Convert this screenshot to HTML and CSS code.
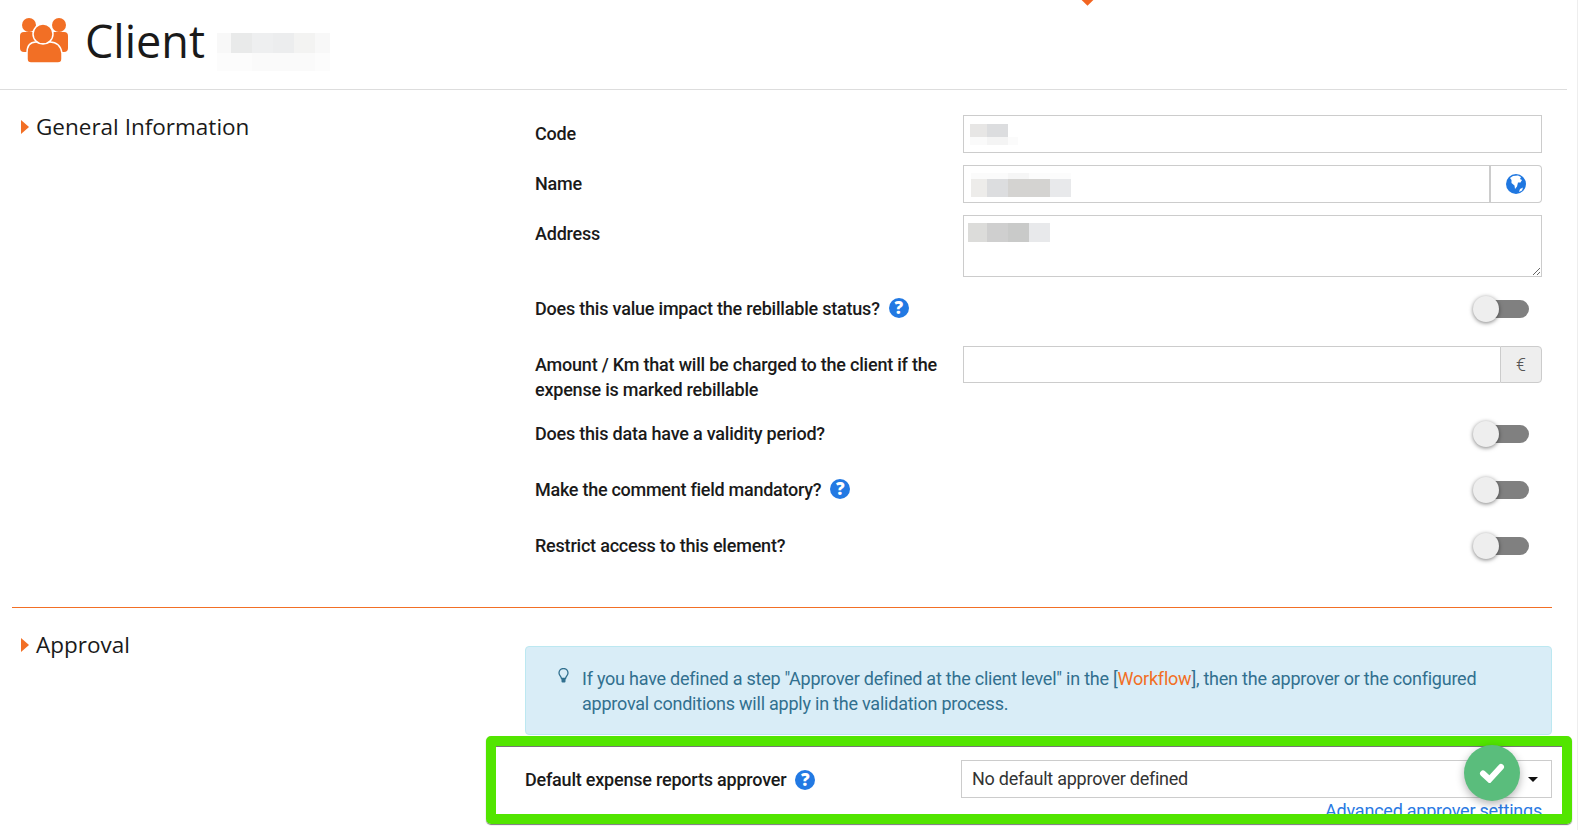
FILE: index.html
```html
<!DOCTYPE html>
<html lang="en">
<head>
<meta charset="utf-8">
<title>Client</title>
<link rel="stylesheet" href="styles.css">
</head>
<body>
<div class="page">
  <span class="top-marker"></span>
  <header class="page-header">
    <svg class="users-icon" viewBox="0 0 48 45" width="48" height="45">
      <circle cx="9" cy="7" r="7" fill="#f26f25"/>
      <circle cx="39" cy="7" r="7" fill="#f26f25"/>
      <path d="M0 18q0-4 4-4h10q2 0 3 2v18H4q-4 0-4-4z" fill="#f26f25"/>
      <path d="M48 18q0-4-4-4H34q-2 0-3 2v18h13q4 0 4-4z" fill="#f26f25"/>
      <circle cx="23" cy="16" r="10" fill="#f26f25" stroke="#fff" stroke-width="1.5"/>
      <path d="M7 35q0-11 9-11q3 2 7 2t7-2q10 0 12 11v6q0 4-4 4H11q-4 0-4-4z" fill="#f26f25" stroke="#fff" stroke-width="1.5"/>
    </svg>
    <h1 class="page-title">Client</h1>
    <svg class="redact redact-title" width="113" height="38" viewBox="0 0 113 38">
      <rect width="14" height="20" fill="#f8f8f8"/><rect x="14" width="21" height="20" fill="#e9eaea"/><rect x="35" width="21" height="20" fill="#eeeff0"/><rect x="56" width="21" height="20" fill="#ecedee"/><rect x="77" width="21" height="20" fill="#f3f3f2"/><rect x="98" width="15" height="20" fill="#f8f8f8"/>
      <rect y="20" width="35" height="18" fill="#fcfcfc"/><rect x="35" y="20" width="63" height="18" fill="#fafafa"/><rect x="98" y="20" width="15" height="18" fill="#fcfcfc"/>
    </svg>
  </header>

  <section class="section">
    <h2 class="section-title">General Information</h2>
    <div class="form">
      <div class="row">
        <label class="label">Code</label>
        <div class="field">
          <input class="input" type="text">
          <svg class="redact redact-code" width="48" height="21" viewBox="0 0 48 21">
            <rect width="17" height="13" fill="#e7e6e5"/><rect x="17" width="21" height="13" fill="#dcdddf"/>
            <rect y="13" width="17" height="8" fill="#fafafa"/><rect x="17" y="13" width="21" height="8" fill="#f4f4f4"/><rect x="38" y="13" width="10" height="8" fill="#fbfbfb"/>
          </svg>
        </div>
      </div>
      <div class="row">
        <label class="label">Name</label>
        <div class="field group">
          <input class="input input-joined" type="text">
          <span class="addon addon-white">
            <svg width="20" height="20" viewBox="0 0 20 20">
              <circle cx="10" cy="10" r="10" fill="#1f77e0"/>
              <path d="M7 2l5-.6 3 1.6-1 2 2 1-1.500 2.500-2.500 0-1 4-2 2.500-.5-3.500-3-2.500v-3L4 4z" fill="#fff"/>
              <path d="M14 15l3-1.500-1 3-3 1.500z" fill="#fff"/>
            </svg>
          </span>
          <svg class="redact redact-name" width="100" height="24" viewBox="0 0 100 24">
            <rect width="40" height="6" fill="#fbfbfb"/><rect x="37" width="21" height="6" fill="#f6f6f6"/><rect x="58" width="42" height="6" fill="#fcfcfc"/>
            <rect y="6" width="16" height="18" fill="#edecea"/><rect x="16" y="6" width="21" height="18" fill="#dcdddf"/><rect x="37" y="6" width="42" height="18" fill="#d4d3d1"/><rect x="79" y="6" width="21" height="18" fill="#e8e9eb"/>
          </svg>
        </div>
      </div>
      <div class="row">
        <label class="label">Address</label>
        <div class="field">
          <textarea class="input textarea"></textarea>
          <svg class="redact redact-address" width="82" height="19" viewBox="0 0 82 19">
            <rect width="19" height="19" fill="#dcdcda"/><rect x="19" width="21" height="19" fill="#cfcfcf"/><rect x="40" width="21" height="19" fill="#c9cac9"/><rect x="61" width="21" height="19" fill="#e8e9eb"/>
          </svg>
        </div>
      </div>
      <div class="row row-toggle gap-first">
        <label class="label-inline">Does this value impact the rebillable status? <span class="help">?</span></label>
        <span class="toggle"><span class="knob"></span></span>
      </div>
      <div class="row row-amount">
        <label class="label">Amount / Km that will be charged to the client if the expense is marked rebillable</label>
        <div class="field group group-short">
          <input class="input input-joined" type="text">
          <span class="addon addon-grey">€</span>
        </div>
      </div>
      <div class="row row-toggle gap-large">
        <label class="label-inline">Does this data have a validity period?</label>
        <span class="toggle"><span class="knob"></span></span>
      </div>
      <div class="row row-toggle gap-large">
        <label class="label-inline label-tight">Make the comment field mandatory? <span class="help">?</span></label>
        <span class="toggle"><span class="knob"></span></span>
      </div>
      <div class="row row-toggle">
        <label class="label-inline">Restrict access to this element?</label>
        <span class="toggle"><span class="knob"></span></span>
      </div>
    </div>
  </section>

  <section class="section section-approval">
    <h2 class="section-title">Approval</h2>
    <div class="approval-body">
      <div class="alert">
        <svg class="bulb" width="11" height="15" viewBox="0 0 11 15">
          <path d="M3.500 10.500C3 8 1 7.500 1 5a4.500 4.500 0 0 1 9 0c0 2.500-2 3-2.500 5.500z" fill="none" stroke="#31708f" stroke-width="1.300"/>
          <rect x="3.500" y="10.500" width="4" height="4" rx="1" fill="#31708f"/>
        </svg>
        <p class="alert-text">If you have defined a step "Approver defined at the client level" in the [<a class="alert-link">Workflow</a>], then the approver or the configured approval conditions will apply in the validation process.</p>
      </div>
      <div class="approver-row">
        <label class="label-inline approver-label">Default expense reports approver <span class="help">?</span></label>
        <div class="select"><span>No default approver defined</span><span class="caret"></span></div>
      </div>
      <a class="advanced-link">Advanced approver settings</a>
    </div>
  </section>

  <div class="highlight-frame"></div>
  <button class="fab" type="button">
    <svg width="26" height="20" viewBox="0 0 26 20"><path d="M4 10.500l6.500 6L22 4" fill="none" stroke="#fff" stroke-width="6" stroke-linecap="round" stroke-linejoin="miter"/></svg>
  </button>
</div>
</body>
</html>
```
FILE: styles.css
```css
* { box-sizing: border-box; }
html, body { margin: 0; padding: 0; background: #fff; }
body { font-family: Roboto, "Liberation Sans", sans-serif; color: #1a1a1a; overflow: hidden; }
.page { position: relative; width: 1578px; height: 830px; overflow: hidden; border-right: 1px solid #eee; }

.top-marker { position: absolute; left: 1083px; top: -5px; width: 9px; height: 9px; background: #f26522; transform: rotate(45deg); }

.page-header { display: flex; align-items: flex-start; height: 90px; width: 1567px; padding: 18px 0 0 20px; border-bottom: 1px solid #ddd; }
.users-icon { flex: none; }
.page-title { margin: 0 0 0 17px; font: 400 45px/46px "Open Sans", sans-serif; color: #1a1a1a; }
.redact { position: absolute; }
.redact-title { position: static; margin: 15px 0 0 12px; flex: none; }

.section { display: grid; grid-template-columns: 513px 1027px; width: 1540px; margin-left: 12px; padding-top: 20px; }
.section-approval { border-top: 1px solid #f26f25; margin-top: 29px; }
.section-title { position: relative; margin: 0; padding-left: 24px; font: 400 22.5px/34px "Open Sans", sans-serif; color: #1a1a1a; height: 34px; }
.section-title::before { content: ""; position: absolute; left: 9px; top: 10px; border-left: 8px solid #f26f25; border-top: 7px solid transparent; border-bottom: 7px solid transparent; }

.form { padding: 5px 10px 0; }
.row { display: grid; grid-template-columns: 428px 579px; margin-bottom: 12px; }
.label { font-size: 18px; font-weight: 500; line-height: 25px; padding: 6px 10px 0 0; letter-spacing: -.21px; }
.label-inline { font-size: 18px; font-weight: 500; line-height: 25px; letter-spacing: -.21px; display: flex; align-items: center; gap: 9px; white-space: nowrap; }
.label-tight { letter-spacing: -.27px; }
.row-toggle .label-inline { padding-bottom: 2px; }
.field { position: relative; display: flex; }
.input { display: block; width: 100%; height: 38px; border: 1px solid #ccc; background: #fff; padding: 6px 12px; margin: 0; outline: none; font: inherit; }
.textarea { height: 62px; }
.input-joined { flex: 1; min-width: 0; border-right: 0; }
.group-short { height: 37px; }
.group-short .input { height: 37px; }
.addon { flex: none; display: flex; align-items: center; justify-content: center; border: 1px solid #ccc; border-radius: 0 4px 4px 0; height: 100%; }
.addon-white { width: 53px; background: #fff; border-left-width: 2px; }
.addon-grey { width: 42px; background: #eee; color: #555; font-size: 18px; font-weight: 300; }
.redact-code { left: 7px; top: 9px; }
.redact-name { left: 8px; top: 8px; }
.redact-address { left: 5px; top: 8px; }

.row-toggle { height: 40px; align-items: center; }
.gap-first { margin-bottom: 17px; }
.gap-large { margin-bottom: 16px; }
.toggle { position: relative; justify-self: end; display: block; width: 52px; height: 18px; margin-right: 13px; border-radius: 9px; background: #808080; }
.knob { position: absolute; left: -4px; top: -4px; width: 26px; height: 26px; border-radius: 50%; background: #eee; box-shadow: 0 1px 4px rgba(0,0,0,.5); }
.help { flex: none; display: inline-flex; align-items: center; justify-content: center; width: 20px; height: 20px; border-radius: 50%; background: #2279e3; color: #fff; font: 800 17px/20px "Open Sans", sans-serif; letter-spacing: 0; }

.approval-body { padding-top: 18px; }
.alert { display: flex; gap: 14px; height: 89px; padding: 19px 32px 0; background: #d9edf7; border: 1px solid #bce8f1; border-radius: 4px; }
.bulb { flex: none; margin-top: 2px; }
.alert-text { margin: 0 0 0 -1px; font-size: 18px; line-height: 25px; color: #31708f; letter-spacing: -.23px; }
.alert-link { color: #f26f25; }
.approver-row { display: grid; grid-template-columns: 436px 591px; margin-top: 25px; height: 38px; }
.approver-label { padding-top: 1px; }
.select { display: flex; align-items: center; justify-content: space-between; border: 1px solid #ccc; padding: 0 13px 2px 10px; font-size: 18px; letter-spacing: -.25px; color: #333; }
.caret { border-top: 5px solid #111; border-left: 5px solid transparent; border-right: 5px solid transparent; margin-top: 2px; }
.advanced-link { display: block; padding-right: 10px; text-align: right; font-size: 18px; line-height: 25px; letter-spacing: -.23px; color: #2a7ae2; }

.highlight-frame { position: absolute; left: 486px; top: 736px; width: 1086px; height: 88px; border: 10px solid #52e500; border-radius: 5px; box-shadow: 0 1px 1px #777, inset 0 1px 0 #777; }
.fab { position: absolute; left: 1464px; top: 745px; width: 56px; height: 56px; padding: 0; border: 0; border-radius: 50%; background: #5abd7c; box-shadow: 0 3px 8px rgba(0,0,0,.3); display: flex; align-items: center; justify-content: center; }
```
